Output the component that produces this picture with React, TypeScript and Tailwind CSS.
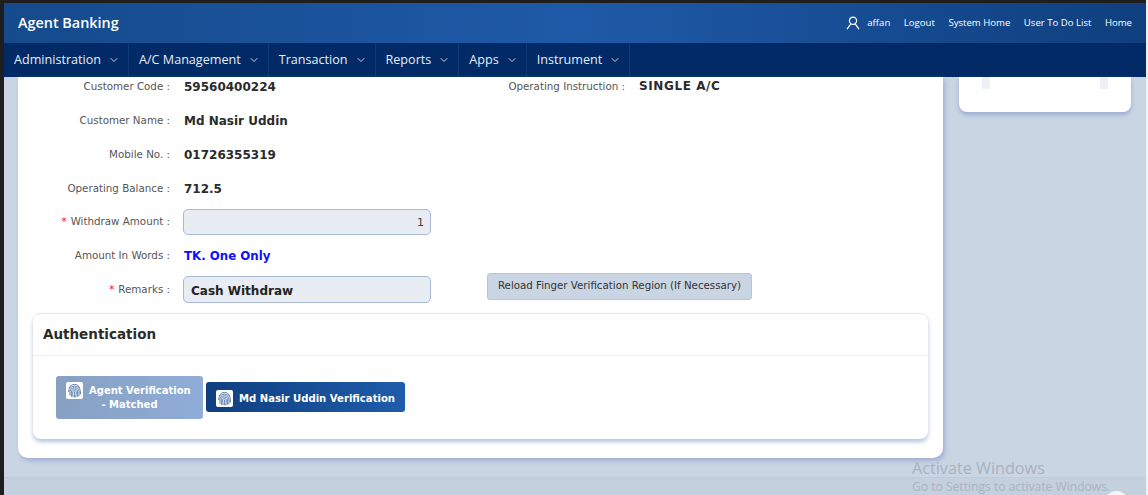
import { ChevronDown } from "lucide-react";

const menus = ["Administration", "A/C Management", "Transaction", "Reports", "Apps", "Instrument"];
const topLinks = ["Logout", "System Home", "User To Do List", "Home"];

function Row({ label, required, className, children }: { label: string; required?: boolean; className?: string; children: React.ReactNode }) {
  return (
    <div className={`flex h-[34px] items-center ${className ?? ""}`}>
      <div className="w-[137px] shrink-0 pt-px text-right text-[10.3px] text-[#555]">
        {required && <span className="mr-1 text-[#f00]">*</span>}
        {label} :
      </div>
      <div className="ml-[13px] min-w-0 flex-1">{children}</div>
    </div>
  );
}

function FingerBadge() {
  return (
    <span className="flex h-[17px] w-[17px] shrink-0 items-center justify-center rounded-[2px] bg-white">
      <svg width="15" height="15" viewBox="0 0 16 16" fill="none" stroke="#3f68a3" strokeWidth="0.9" strokeLinecap="round">
        <path d="M2.2 5.2C3.4 2.9 5.5 1.5 8 1.5s4.6 1.4 5.8 3.7" />
        <path d="M1.7 9.2C1.9 5.8 4.6 3.3 8 3.3s6.1 2.5 6.3 5.9v2.6" />
        <path d="M3.2 13c-.1-1.2-.1-2.5-.1-3.7C3.1 6.9 5.3 5 8 5s4.9 1.9 4.9 4.3c0 1.6 0 3-.2 4.4" />
        <path d="M4.8 14.2c-.2-1.6-.2-3.2-.2-4.8C4.6 7.7 6.1 6.6 8 6.6s3.4 1.1 3.4 2.8c0 1.8-.1 3.5-.4 5" />
        <path d="M6.4 14.6c-.2-1.7-.3-3.4-.3-5.1C6.1 8.6 6.9 8.1 8 8.1s1.9.5 1.9 1.4c0 1.8-.1 3.6-.5 5.3" />
        <path d="M8 9.6c0 1.8 0 3.5-.1 5.2" />
      </svg>
    </span>
  );
}

export default function App() {
  return (
    <div className="relative flex h-[495px] w-full flex-col overflow-hidden border-r-2 border-[#eef1f5] bg-[#1e1e1e] pt-[3px] pl-[4px] font-['DejaVu_Sans',sans-serif]">
      {/* Header */}
      <header className="flex h-[40px] shrink-0 items-center justify-between bg-gradient-to-r from-[#154a8c] via-[#1f5aa8] to-[#0f3f7e] pl-[14px] pr-[14px] font-['Open_Sans',sans-serif] text-white">
        <div className="text-[14.4px] font-semibold">Agent Banking</div>
        <div className="flex items-center gap-[13.5px] text-[9.6px]">
          <div className="flex items-center gap-[7px]">
            <svg width="14" height="14" viewBox="0 0 14 14" fill="none" stroke="currentColor" strokeWidth="1.2" strokeLinecap="round">
              <circle cx="7" cy="4.8" r="3.6" />
              <path d="M4.8 7.8 1.2 12.8M9.2 7.8l3.6 5" />
            </svg>
            <span>affan</span>
          </div>
          {topLinks.map((link) => (
            <span key={link}>{link}</span>
          ))}
        </div>
      </header>

      {/* Nav */}
      <nav className="flex h-[34px] shrink-0 items-stretch bg-[#012a66] font-['Open_Sans',sans-serif] text-[12.6px] text-[#e6edf7]">
        {menus.map((m) => (
          <div key={m} className="flex items-center gap-[7px] border-r border-[#0b3a78] pr-[8px] pl-[10px]">
            <span>{m}</span>
            <ChevronDown size={12} strokeWidth={1.7} />
          </div>
        ))}
      </nav>

      {/* Body */}
      <div className="flex min-h-0 flex-1 flex-col bg-[#cad5e3]">
        <div className="flex h-[400px] shrink-0 items-start">
          <main className="ml-[14px] flex h-[381px] w-[925px] shrink-0 flex-col rounded-b-[10px] bg-white px-[15px] shadow-[2px_3px_5px_#a2b0d2]">
            <div className="-mt-[8px] grid grid-cols-[454px_1fr]">
              <Row label="Customer Code">
                <span className="ml-px text-[12px] font-bold text-[#2b2b2b]">59560400224</span>
              </Row>
              <div className="flex h-[34px] items-center">
                <div className="w-[138px] shrink-0 pt-px text-right text-[10.3px] text-[#555]">Operating Instruction :</div>
                <span className="ml-[14px] text-[12px] font-bold tracking-[0.6px] text-[#2b2b2b]">SINGLE A/C</span>
              </div>
            </div>
            <Row label="Customer Name">
              <span className="ml-px text-[12px] font-bold text-[#2b2b2b]">Md Nasir Uddin</span>
            </Row>
            <Row label="Mobile No.">
              <span className="ml-px text-[12px] font-bold text-[#2b2b2b]">01726355319</span>
            </Row>
            <Row label="Operating Balance">
              <span className="ml-px text-[12px] font-bold text-[#2b2b2b]">712.5</span>
            </Row>
            <Row label="Withdraw Amount" required className="-mt-px">
              <div className="mt-[2px] flex h-[26px] w-[248px] items-center justify-end rounded-[5px] border border-[#a9b8d2] bg-[#e8ecf3] px-[6px] pt-[3px] text-[11px] text-[#444]">
                1
              </div>
            </Row>
            <Row label="Amount In Words">
              <span className="ml-px text-[11.8px] font-bold text-[#0f0fff]">TK. One Only</span>
            </Row>
            <div className="flex items-center">
              <div className="w-[454px] shrink-0">
                <Row label="Remarks" required>
                  <div className="flex h-[27px] w-[248px] items-center rounded-[5px] border border-[#a9b8d2] bg-[#e8ecf3] px-[7px] pt-[3px] text-[12px] font-bold text-[#222]">
                    Cash Withdraw
                  </div>
                </Row>
              </div>
              <button className="-mt-[6px] h-[27px] w-[265px] rounded-[3px] border border-[#b8c5d8] bg-[#cad5e3] text-[10.25px] text-[#333]">
                Reload Finger Verification Region (If Necessary)
              </button>
            </div>

            {/* Authentication */}
            <section className="mt-[7px] h-[126px] rounded-[8px] border-t border-[#e4e6f0] bg-white shadow-[0_3px_4px_#b9c3e0]">
              <h2 className="flex h-[42px] shrink-0 items-center border-b border-[#f0f1f5] pl-[10px] text-[13.5px] font-bold text-[#2b2b2b]">
                Authentication
              </h2>
              <div className="flex items-center gap-[3px] pt-[20px] pl-[23px]">
                <button className="flex h-[43px] w-[147px] flex-col rounded-[3px] bg-gradient-to-r from-[#87a0c2] to-[#8fadd8] pt-[6px] text-[10px] font-bold leading-[14px] text-white">
                  <span className="flex h-[16px] gap-[6px] pl-[10px]">
                    <FingerBadge />
                    <span className="pt-[2px]">Agent Verification</span>
                  </span>
                  <span className="block w-full text-center">- Matched</span>
                </button>
                <button className="-mt-px flex h-[30px] w-[199px] items-center gap-[6px] rounded-[3px] bg-gradient-to-r from-[#0f3f80] to-[#1f5cab] pl-[10px] pt-[2px] text-[10.1px] font-bold text-white">
                  <FingerBadge />
                  <span className="pt-[2px]">Md Nasir Uddin Verification</span>
                </button>
              </div>
            </section>
          </main>

          <aside className="ml-[16px] flex h-[35px] w-[172px] shrink-0 justify-between rounded-b-[8px] bg-white px-[23px] shadow-[0_3px_4px_#9fadd2]">
            <div className="h-[12px] w-[8px] bg-[#edf0f6]" />
            <div className="h-[12px] w-[8px] bg-[#edf0f6]" />
          </aside>
        </div>
        <footer className="min-h-0 flex-1 border-t border-[#bfcbda] bg-[#c5d0df]" />
      </div>

      {/* Windows activation watermark */}
      <div className="pointer-events-none absolute left-[912px] top-[458px] font-['Open_Sans',sans-serif] text-[#a9b2bf]">
        <div className="text-[16.2px] leading-[20px]">Activate Windows</div>
        <div className="text-[12.1px] leading-[18px]">Go to Settings to activate Windows.</div>
      </div>
      <div className="absolute left-[1105px] top-[491px] h-[23px] w-[23px] rounded-full bg-white/80" />
    </div>
  );
}
